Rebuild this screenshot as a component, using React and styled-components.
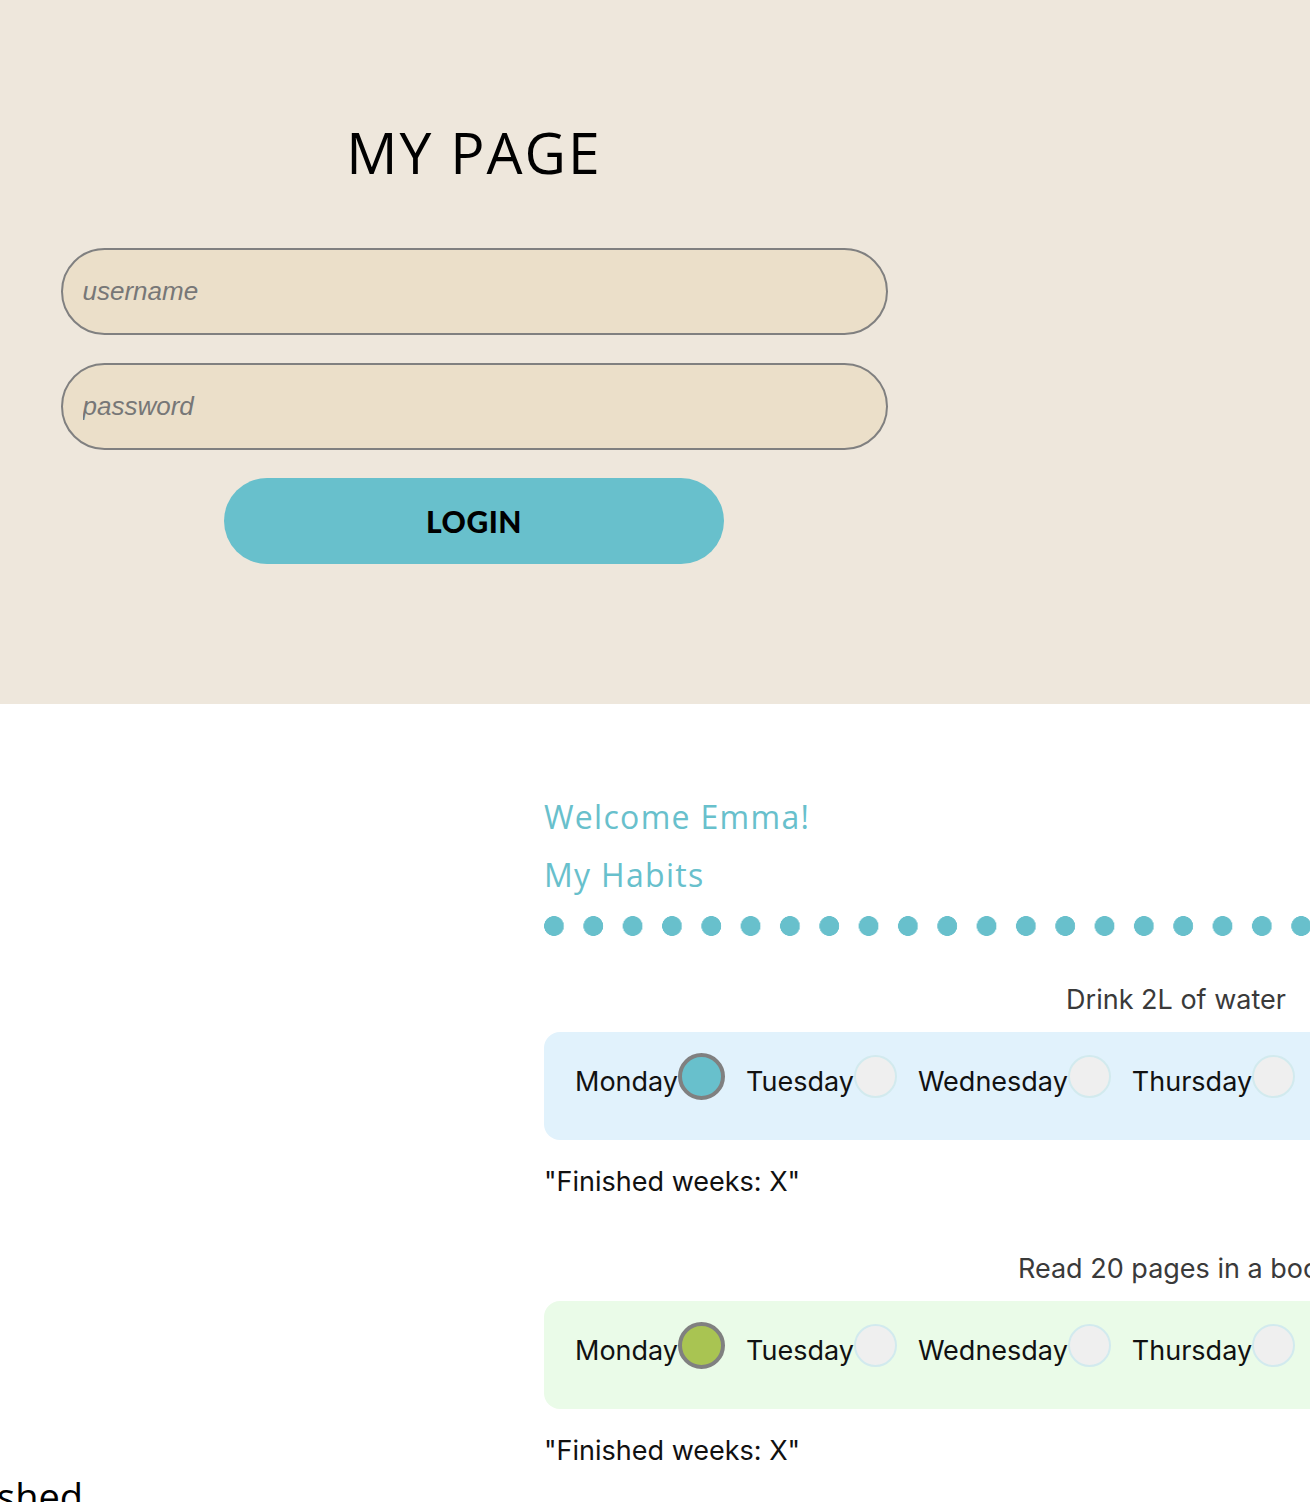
import React from "react";
import styled, { createGlobalStyle } from "styled-components";

const GlobalStyle = createGlobalStyle`
  html, body {
    margin: 0;
    padding: 0;
    background: #ffffff;
  }
  body {
    font-family: "Inter", "Roboto", sans-serif;
  }
  * {
    box-sizing: border-box;
  }
`;

const teal = "#68C0CC";

// Login hero
const Hero = styled.section`
  background: #eee7dc;
  height: 704px;
  min-width: 1310px;
`;

const LoginForm = styled.form`
  width: 948px;
  display: flex;
  flex-direction: column;
  align-items: center;
  padding-top: 118px;
`;

const PageTitle = styled.h1`
  margin: 0 0 62px;
  font-family: "Open Sans", sans-serif;
  font-weight: 400;
  font-size: 57px;
  line-height: 68px;
  letter-spacing: 2px;
  color: #000;
`;

const Field = styled.input`
  width: 827px;
  height: 87px;
  margin-bottom: 28px;
  padding: 0 20px;
  border: 2px solid #808080;
  border-radius: 44px;
  background: #ebdfc9;
  font-family: "Liberation Sans", Arial, sans-serif;
  font-style: italic;
  font-size: 26px;
  color: #333;
  outline: none;

  &::placeholder {
    color: #777;
  }
`;

const LoginButton = styled.button`
  width: 500px;
  height: 86px;
  border: none;
  border-radius: 43px;
  background: ${teal};
  font-family: "Lato", sans-serif;
  font-weight: 900;
  font-size: 30px;
  letter-spacing: 0.5px;
  color: #000;
  cursor: pointer;
`;

// Habits
const Main = styled.main`
  display: flex;
  padding-top: 89px;
`;

const Aside = styled.aside`
  width: 544px;
  flex-shrink: 0;
  padding-top: 675px;
`;

const AsideTitle = styled.h3`
  margin: 0 0 0 -65px;
  font-family: "Open Sans", sans-serif;
  font-weight: 400;
  font-size: 38px;
  line-height: 56px;
  color: #000;
  white-space: nowrap;
`;

const Content = styled.div`
  flex-shrink: 0;
  width: 1264px;
`;

const Heading = styled.h2`
  margin: 0 0 10px;
  font-family: "Open Sans", sans-serif;
  font-weight: 400;
  font-size: 32px;
  line-height: 48px;
  letter-spacing: 1.3px;
  color: ${teal};
`;

const Dots = styled.div`
  height: 20px;
  margin-top: 17px;
  background-image: radial-gradient(circle at 10px 10px, ${teal} 9.6px, transparent 10.2px);
  background-size: 39.33px 20px;
  background-repeat: repeat-x;
`;

const HabitList = styled.div`
  padding-top: 47px;
  display: flex;
  flex-direction: column;
  gap: 53px;
`;

const Habit = styled.article``;

const HabitName = styled.div`
  text-align: center;
  font-size: 27px;
  line-height: 34px;
  color: #3a3a3a;
  margin-bottom: 15px;
`;

const Week = styled.div`
  display: flex;
  align-items: center;
  height: 108px;
  padding: 0 0 20px 31px;
  border-radius: 16px;
  background: ${(p) => p.$bg};
`;

const Day = styled.label`
  display: flex;
  align-items: center;
  margin-right: 21px;
  font-size: 27px;
  line-height: 34px;
  color: #111;
  white-space: nowrap;
`;

const DayName = styled.span`
  padding-top: 12px;
`;

const Check = styled.span`
  flex-shrink: 0;
  width: ${(p) => (p.$done ? 47 : 43)}px;
  height: ${(p) => (p.$done ? 47 : 43)}px;
  border-radius: 50%;
  background: ${(p) => (p.$done ? p.$color : "#efefef")};
  border: ${(p) => (p.$done ? "4px solid #808080" : "2px solid #d2eaee")};
`;

const Finished = styled.p`
  margin: 25px 0 0;
  font-size: 27px;
  line-height: 34px;
  color: #111;
`;

const days = ["Monday", "Tuesday", "Wednesday", "Thursday", "Friday", "Saturday", "Sunday"];

const habits = [
  { name: "Drink 2L of water", bg: "#e1f2fc", color: teal },
  { name: "Read 20 pages in a book", bg: "#eafbe8", color: "#a9c452" },
];

const App = () => (
  <>
    <GlobalStyle />
    <Hero>
      <LoginForm onSubmit={(e) => e.preventDefault()}>
        <PageTitle>MY PAGE</PageTitle>
        <Field type="text" placeholder="username" />
        <Field type="password" placeholder="password" />
        <LoginButton type="submit">LOGIN</LoginButton>
      </LoginForm>
    </Hero>
    <Main>
      <Aside>
        <AsideTitle>Finished</AsideTitle>
      </Aside>
      <Content>
        <Heading>Welcome Emma!</Heading>
        <Heading>My Habits</Heading>
        <Dots />
        <HabitList>
          {habits.map((h) => (
            <Habit key={h.name}>
              <HabitName>{h.name}</HabitName>
              <Week $bg={h.bg}>
                {days.map((d, i) => (
                  <Day key={d}>
                    <DayName>{d}</DayName>
                    <Check $done={i === 0} $color={h.color} />
                  </Day>
                ))}
              </Week>
              <Finished>"Finished weeks: X"</Finished>
            </Habit>
          ))}
        </HabitList>
      </Content>
    </Main>
  </>
);

export default App;
